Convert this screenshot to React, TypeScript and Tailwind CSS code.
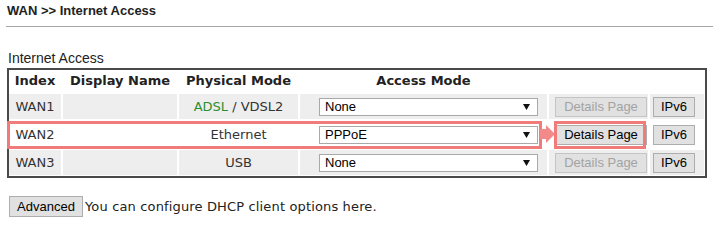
const verdana = "font-['DejaVu_Sans',Verdana,sans-serif]"
const arial = "font-['Liberation_Sans',Arial,sans-serif]"

interface WanRow {
  index: string
  physical: React.ReactNode
  mode: string
  enabled: boolean
}

const rows: WanRow[] = [
  {
    index: 'WAN1',
    physical: (
      <>
        <span className="text-[#2f8f2f]">ADSL</span>&nbsp;/ VDSL2
      </>
    ),
    mode: 'None',
    enabled: false,
  },
  { index: 'WAN2', physical: 'Ethernet', mode: 'PPPoE', enabled: true },
  { index: 'WAN3', physical: 'USB', mode: 'None', enabled: false },
]

const cols = 'grid grid-cols-[52px_114px_119px_247px_99px_54px] gap-x-[2px]'

function FakeSelect({ value }: { value: string }) {
  return (
    <div
      className={`ml-[19px] flex h-[18px] w-[219px] items-center justify-between border border-[#a9a9a9] bg-white pl-[5px] pr-[7px] text-[13px] text-black ${arial}`}
    >
      <span>{value}</span>
      <svg width="7" height="6" viewBox="0 0 7 6">
        <polygon points="0,0 7,0 3.5,6" fill="#111" />
      </svg>
    </div>
  )
}

function Btn({ label, disabled, className = '' }: { label: string; disabled?: boolean; className?: string }) {
  return (
    <button
      className={`h-[20px] border bg-[#e1e1e1] text-[13px] leading-none ${arial} ${
        disabled ? 'border-[#c4c4c4] text-[#a3a3a3]' : 'border-[#adadad] text-black'
      } ${className}`}
    >
      {label}
    </button>
  )
}

export default function App() {
  return (
    <div className="h-[245px] w-[713px] bg-white text-[#333]">
      <div className={`h-[26px] pl-[7px] pt-[3px] text-[13px] font-bold leading-[16px] text-[#222] ${arial}`}>
        WAN &gt;&gt; Internet Access
      </div>
      <div className="ml-[6px] h-px bg-[#a6a6a6]" />

      <div className={`ml-[8px] mt-[23px] h-[16px] text-[14px] leading-[16px] text-[#222] ${arial}`}>Internet Access</div>

      <div className={`relative ml-[7px] mt-[2px] w-[700px] border-2 border-[#4a4a4a] pb-[1px] text-[13px] ${verdana}`}>
        <div className={`${cols} h-[22px] items-center font-bold text-[#222]`}>
          <div className="text-center">Index</div>
          <div className="text-center">Display Name</div>
          <div className="text-center">Physical Mode</div>
          <div className="text-center">Access Mode</div>
          <div />
          <div />
        </div>

        <div className="mt-[2px] flex flex-col gap-y-[3px]">
          {rows.map((r) => {
            const bg = r.enabled ? 'bg-white' : 'bg-[#eeeeee]'
            return (
              <div key={r.index} className={`${cols} h-[25px]`}>
                <div className={`${bg} flex items-center justify-center`}>{r.index}</div>
                <div className={bg} />
                <div className={`${bg} flex items-center justify-center`}>{r.physical}</div>
                <div className={`${bg} flex items-center`}>
                  <FakeSelect value={r.mode} />
                </div>
                <div className={`${bg} flex items-center`}>
                  <Btn label="Details Page" disabled={!r.enabled} className="ml-[6px] w-[92px]" />
                </div>
                <div className={`${bg} flex items-center`}>
                  <Btn label="IPv6" className="ml-[3px] w-[42px]" />
                </div>
              </div>
            )
          })}
        </div>

        {/* highlight annotation around WAN2 */}
        <div className="pointer-events-none absolute left-[-2px] top-[51px] h-[28px] w-[535px] border-[3px] border-[#f07b7b]" />
        <svg className="pointer-events-none absolute left-[531px] top-[55px]" width="15" height="18" viewBox="0 0 15 18">
          <polygon points="0,4 6,4 6,0 15,9 6,18 6,14 0,14" fill="#f28a8a" />
        </svg>
        <div className="pointer-events-none absolute left-[545px] top-[51px] h-[28px] w-[92px] border-[3px] border-[#f07b7b]" />
      </div>

      <div className="ml-[9px] mt-[18px] flex items-center">
        <button className={`h-[21px] w-[74px] border border-[#adadad] bg-[#e1e1e1] text-[13px] leading-none text-black ${arial}`}>
          Advanced
        </button>
        <span className={`ml-[2px] text-[13px] tracking-[0.15px] text-[#222] ${verdana}`}>
          You can configure DHCP client options here.
        </span>
      </div>
    </div>
  )
}
